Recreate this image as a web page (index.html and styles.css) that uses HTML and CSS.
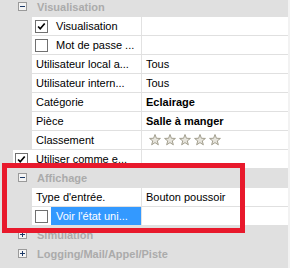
FILE: index.html
```html
<!DOCTYPE html>
<html>
<head>
<meta charset="utf-8">
<link rel="stylesheet" href="styles.css">
</head>
<body>
<svg width="0" height="0" class="defs">
  <defs>
    <symbol id="star" viewBox="0 0 12 12">
      <polygon points="6,0.5 7.41,4.26 11.42,4.44 8.28,6.94 9.35,10.81 6,8.6 2.65,10.81 3.72,6.94 0.58,4.44 4.59,4.26" fill="#e6e4dc" stroke="#a29e8e" stroke-width="1" stroke-linejoin="round"/>
    </symbol>
    <symbol id="check" viewBox="0 0 13 13">
      <path d="M2.5 6.5 L5 9.2 L10.3 3" fill="none" stroke="#000" stroke-width="2"/>
    </symbol>
  </defs>
</svg>
<div class="page">
  <div class="grid">
    <div class="cat first"><span class="exp"><span class="bar-h"></span></span><span class="cat-label">Visualisation</span></div>
    <div class="group">
      <div class="row"><div class="name"><span class="cb"><svg><use href="#check"/></svg></span><span class="lbl">Visualisation</span></div><div class="val"></div></div>
      <div class="row"><div class="name"><span class="cb"></span><span class="lbl">Mot de passe ...</span></div><div class="val"></div></div>
      <div class="row"><div class="name"><span class="txt">Utilisateur local a...</span></div><div class="val">Tous</div></div>
      <div class="row"><div class="name"><span class="txt">Utilisateur intern...</span></div><div class="val">Tous</div></div>
      <div class="row"><div class="name"><span class="txt">Catégorie</span></div><div class="val bold">Eclairage</div></div>
      <div class="row"><div class="name"><span class="txt">Pièce</span></div><div class="val bold">Salle à manger</div></div>
      <div class="row"><div class="name"><span class="txt">Classement</span></div><div class="val stars">
        <svg class="star"><use href="#star"/></svg><svg class="star"><use href="#star"/></svg><svg class="star"><use href="#star"/></svg><svg class="star"><use href="#star"/></svg><svg class="star"><use href="#star"/></svg>
      </div></div>
      <div class="row top"><div class="name"><span class="cb"><svg><use href="#check"/></svg></span><span class="lbl">Utiliser comme e...</span></div><div class="val"></div></div>
    </div>
    <div class="cat"><span class="exp"><span class="bar-h"></span></span><span class="cat-label">Affichage</span></div>
    <div class="group">
      <div class="row"><div class="name"><span class="txt">Type d'entrée.</span></div><div class="val">Bouton poussoir</div></div>
      <div class="row"><div class="name"><span class="cb"></span><span class="lbl sel">Voir l'état uni...</span></div><div class="val"></div></div>
    </div>
    <div class="cat"><span class="exp"><span class="bar-h"></span><span class="bar-v"></span></span><span class="cat-label">Simulation</span></div>
    <div class="cat"><span class="exp"><span class="bar-h"></span><span class="bar-v"></span></span><span class="cat-label">Logging/Mail/Appel/Piste</span></div>
  </div>
  <div class="highlight"></div>
</div>
</body>
</html>
```
FILE: styles.css
```css
html, body {
  margin: 0;
  padding: 0;
}
body {
  background: #f2f2f2;
  font-family: "Liberation Sans", Arial, sans-serif;
  font-size: 11px;
  color: #000;
  width: 290px;
  height: 268px;
  overflow: hidden;
}
.defs {
  position: absolute;
  width: 0;
  height: 0;
}
.page {
  position: relative;
  width: 288px;
  height: 268px;
  background: #e0e0e0;
  overflow: hidden;
}
.grid {
  display: flex;
  flex-direction: column;
}
.cat {
  height: 19px;
  display: flex;
  align-items: center;
  padding-left: 18px;
  gap: 10px;
}
.cat.first {
  margin-top: -3px;
}
.exp {
  position: relative;
  width: 9px;
  height: 9px;
  box-sizing: border-box;
  border: 1px solid #9a9a9a;
  background: #f4f4f4;
  flex: none;
}
.bar-h {
  position: absolute;
  left: 1px;
  top: 3px;
  width: 5px;
  height: 1px;
  background: #1c3a68;
}
.bar-v {
  position: absolute;
  left: 3px;
  top: 1px;
  width: 1px;
  height: 5px;
  background: #1c3a68;
}
.cat-label {
  font-weight: bold;
  color: #ababab;
  white-space: nowrap;
}
.group {
  display: flex;
  flex-direction: column;
  gap: 1px;
  margin-top: 1px;
}
.row {
  height: 18px;
  margin-left: 32px;
  display: grid;
  grid-template-columns: 110px 1fr;
  background: #fff;
}
.row.top {
  margin-left: 13px;
  grid-template-columns: 129px 1fr;
}
.name {
  box-sizing: border-box;
  border-right: 1px solid #e2e2e2;
  display: flex;
  align-items: center;
  padding-left: 3px;
  white-space: nowrap;
}
.row.top .name {
  padding-left: 2px;
}
.txt {
  padding-left: 1px;
}
.cb {
  width: 13px;
  height: 13px;
  box-sizing: border-box;
  border: 1px solid #707070;
  background: #fff;
  flex: none;
  display: flex;
}
.cb svg {
  width: 11px;
  height: 11px;
}
.lbl {
  margin-left: 3px;
  padding-left: 5px;
  height: 18px;
  line-height: 18px;
  flex: 1;
}
.lbl.sel {
  background: #3399ff;
  color: #fff;
}
.val {
  display: flex;
  align-items: center;
  padding-left: 4px;
  white-space: nowrap;
}
.val.bold {
  font-weight: bold;
}
.stars {
  gap: 3px;
  padding-left: 7px;
}
.star {
  width: 12px;
  height: 12px;
  flex: none;
}
.highlight {
  position: absolute;
  left: 2px;
  top: 163px;
  width: 243px;
  height: 70px;
  box-sizing: border-box;
  border: 5px solid #e8192c;
}
```
